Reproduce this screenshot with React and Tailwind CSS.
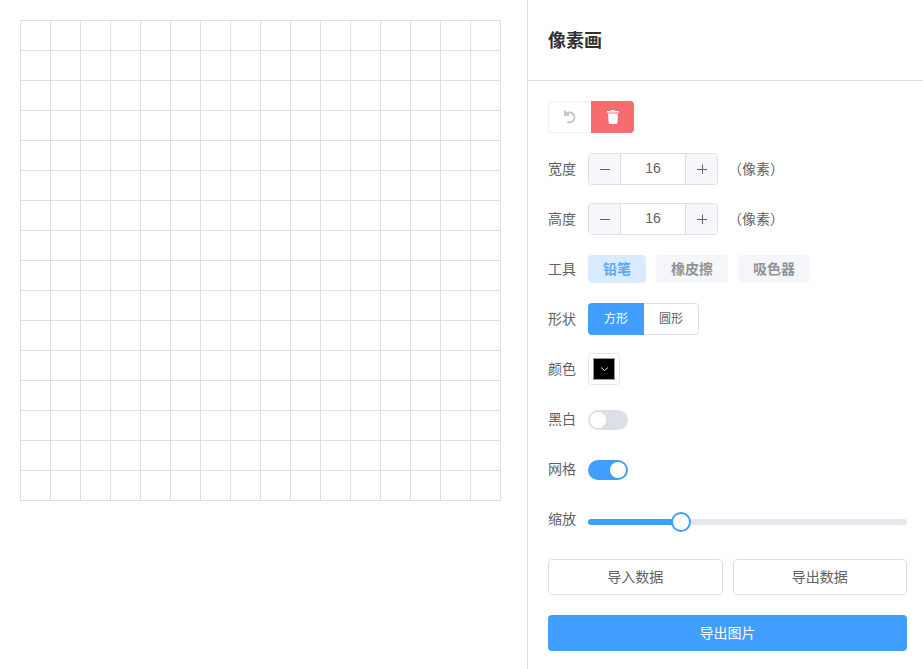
import React from 'react';

const cells = Array.from({ length: 256 }, (_, i) => i);

function Row({ label, children, className = 'h-8 mb-[18px]' }) {
    return (
        <div className={`flex items-center ${className}`}>
            <span className="w-10 shrink-0 text-sm text-[#606266]">{label}</span>
            {children}
        </div>
    );
}

function NumberInput({ value }) {
    return (
        <div className="flex items-center">
            <div className="flex h-8 w-[130px] rounded border border-[#dcdfe6] text-[#606266] overflow-hidden">
                <div className="w-8 flex items-center justify-center bg-[#f5f7fa] border-r border-[#dcdfe6]">
                    <svg width="10" height="10" viewBox="0 0 10 10"><path d="M0 5.5h10" stroke="#606266" strokeWidth="1" /></svg>
                </div>
                <div className="flex-1 flex items-center justify-center pb-0.5 text-sm">{value}</div>
                <div className="w-8 flex items-center justify-center bg-[#f5f7fa] border-l border-[#dcdfe6]">
                    <svg width="10" height="10" viewBox="0 0 10 10"><path d="M0 5.5h10M5.5 0.5v10" stroke="#606266" strokeWidth="1" /></svg>
                </div>
            </div>
            <span className="ml-2.5 text-sm text-[#606266]">（像素）</span>
        </div>
    );
}

function Switch({ on }) {
    return (
        <div className={`w-10 h-5 rounded-full p-0.5 flex ${on ? 'bg-[#409eff] justify-end' : 'bg-[#dcdfe6] justify-start'}`}>
            <div className="w-4 h-4 rounded-full bg-white" />
        </div>
    );
}

export default function App() {
    return (
        <div className="flex h-screen overflow-hidden bg-white font-['Liberation_Sans','Noto_Sans_CJK_SC',sans-serif]">
            {/* Canvas */}
            <div className="w-[527px] shrink-0 p-5">
                <div className="grid grid-cols-[repeat(16,30px)] w-[481px] border-l border-t border-[#dcdfe6]">
                    {cells.map(i => (
                        <div key={i} className="h-[30px] border-r border-b border-[#dcdfe6]" />
                    ))}
                </div>
            </div>

            {/* Sidebar */}
            <div className="flex-1 border-l border-[#dcdfe6] min-w-0">
                <div className="h-[81px] border-b border-[#dcdfe6] pl-5 pt-0.5 flex items-center">
                    <h2 className="text-lg font-bold text-[#303133]">像素画</h2>
                </div>

                <div className="pt-5 pl-5 pr-4">
                    <div className="flex h-8 mb-5">
                        <div className="w-[43px] flex items-center justify-center border border-r-0 border-[#ebeef5] rounded-l">
                            <svg width="14" height="14" viewBox="0 0 14 14" fill="none" stroke="#c0c4cc" strokeWidth="2">
                                <path d="M2.6 4.2A5 5 0 1 1 4.4 12" />
                                <path d="M2 0.6v4.2h4.2" />
                            </svg>
                        </div>
                        <div className="w-[43px] flex items-center justify-center bg-[#f76d6f] rounded-r">
                            <svg width="12" height="14" viewBox="0 0 12 14" fill="#fff">
                                <path d="M4.2 0h3.6l.5 1H12v1.4H0V1h3.7z" />
                                <path d="M1 3.4h10l-.7 9.4a1.2 1.2 0 0 1-1.2 1.2H2.9a1.2 1.2 0 0 1-1.2-1.2z" />
                            </svg>
                        </div>
                    </div>

                    <Row label="宽度"><NumberInput value="16" /></Row>
                    <Row label="高度"><NumberInput value="16" /></Row>

                    <Row label="工具">
                        <div className="flex gap-2.5 text-sm font-bold">
                            <div className="h-7 px-[15px] flex items-center rounded bg-[#d9ecff] text-[#5aa9fb]">铅笔</div>
                            <div className="h-7 px-[15px] flex items-center rounded bg-[#f4f6fa] text-[#909399]">橡皮擦</div>
                            <div className="h-7 px-[15px] flex items-center rounded bg-[#f4f6fa] text-[#909399]">吸色器</div>
                        </div>
                    </Row>

                    <Row label="形状">
                        <div className="flex h-8 text-xs">
                            <div className="w-14 flex items-center justify-center rounded-l bg-[#409eff] text-white">方形</div>
                            <div className="w-[55px] flex items-center justify-center rounded-r border border-l-0 border-[#dcdfe6] text-[#606266]">圆形</div>
                        </div>
                    </Row>

                    <Row label="颜色">
                        <div className="w-8 h-8 p-1 rounded border border-[#e6e6e6]">
                            <div className="w-full h-full bg-black border border-[#999] flex items-center justify-center">
                                <svg width="9" height="6" viewBox="0 0 9 6" fill="none" stroke="#ddd" strokeWidth="1"><path d="M1 1.5 4.5 4.5 8 1.5" /></svg>
                            </div>
                        </div>
                    </Row>

                    <Row label="黑白" className="h-5 mt-[25px] mb-[30px] [&>span]:-translate-y-px"><Switch /></Row>
                    <Row label="网格" className="h-5 mb-[30px] [&>span]:-translate-y-px"><Switch on /></Row>

                    <Row label="缩放" className="h-5 mb-[29px] [&>span]:-translate-y-px">
                        <div className="relative flex-1 h-1.5 mt-1 rounded-full bg-[#e4e7ed]">
                            <div className="h-full w-[93px] rounded-full bg-[#409eff]" />
                            <div className="absolute left-[83px] -top-[7px] w-5 h-5 rounded-full bg-white border-2 border-[#409eff]" />
                        </div>
                    </Row>

                    <div className="flex gap-2.5 mb-5 text-sm text-[#606266]">
                        <button className="flex-1 h-9 rounded border border-[#dcdfe6]">导入数据</button>
                        <button className="flex-1 h-9 rounded border border-[#dcdfe6]">导出数据</button>
                    </div>
                    <button className="w-full h-9 rounded bg-[#409eff] text-sm text-white">导出图片</button>
                </div>
            </div>
        </div>
    );
}
